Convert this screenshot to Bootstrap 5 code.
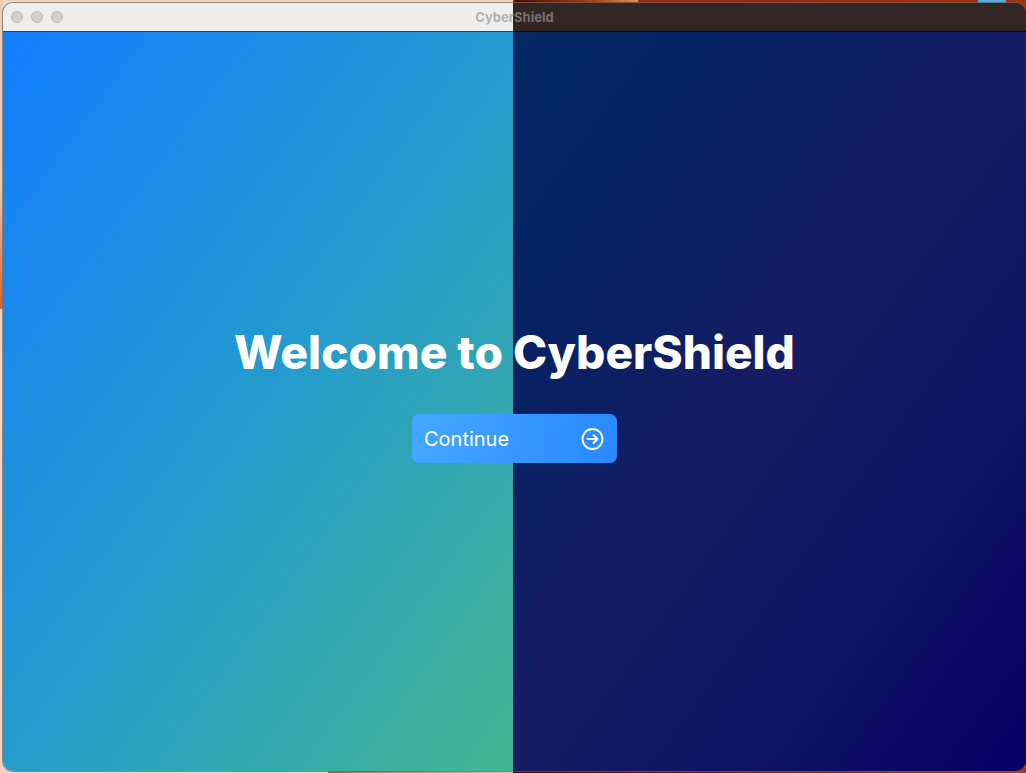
<!DOCTYPE html>
<html lang="en">
<head>
<meta charset="utf-8">
<meta name="viewport" content="width=device-width, initial-scale=1">
<title>CyberShield</title>
<link href="https://cdn.jsdelivr.net/npm/bootstrap@5.3.0/dist/css/bootstrap.min.css" rel="stylesheet">
<style>
  :root { --split: calc(50vw - 3px); }
  body {
    font-family: Inter, "Liberation Sans", sans-serif;
    padding: 3px 0 2px 3px;
    /* desktop wallpaper showing around the window */
    background:
      linear-gradient(#48b4e6, #48b4e6) 98% 0 / 28px 3px no-repeat,
      linear-gradient(90deg, #4a0800, #a83a10 60%, #f09040) 57% 0 / 12vw 2px no-repeat,
      linear-gradient(#e9cdb5 60%, #d8602f) 0 0 / 3px 40vh no-repeat,
      linear-gradient(90deg, #a4693f, #d9c0ac) 39% 100% / 18vw 2px no-repeat,
      linear-gradient(90deg, #380008, #b8320c) 100% 100% / 50vw 2px no-repeat,
      linear-gradient(90deg, #f0d6c1 50%, #8c2406 50%, #a82e0c);
  }
  .app-window { border-radius: 10px; box-shadow: 0 0 0 1px rgba(110, 100, 98, .7); }
  .titlebar {
    height: 29px;
    border-bottom: 1px solid rgba(0, 0, 0, .75);
    background: linear-gradient(90deg, #f0eeed var(--split), #322725 var(--split));
    padding: 0 8px;
  }
  .window-dot { width: 12px; height: 12px; border: 1px solid #b9b7b5; background: #d3d1cf; }
  .window-title { font-size: 13px; line-height: 20px; font-weight: 700; color: rgba(150, 148, 146, .69); }
  .welcome {
    background:
      linear-gradient(126deg, #127eff, #249bce 50%, #43b68f) left / var(--split) 100% no-repeat,
      linear-gradient(126deg, #042963, #062263 22%, #161c63 49%, #0c1264 75%, #060064) right / calc(100% - var(--split)) 100% no-repeat;
  }
  .welcome-heading { font-size: 46px; line-height: 56px; font-weight: 800; margin-bottom: 34px; }
  .btn-continue {
    --bs-btn-border-width: 0px;
    --bs-btn-border-radius: 7px;
    --bs-btn-color: #fff;
    --bs-btn-hover-color: #fff;
    --bs-btn-padding-x: 12px;
    width: 205px;
    height: 49px;
    font-size: 20px;
    background: linear-gradient(100deg, #45a8ff, #2888ff);
  }
</style>
</head>
<body class="vh-100">
<div class="app-window h-100 d-flex flex-column overflow-hidden">
  <header class="titlebar d-flex align-items-center flex-shrink-0">
    <div class="d-flex gap-2 flex-fill w-50">
      <button type="button" class="window-dot rounded-circle p-0" aria-label="Close"></button>
      <button type="button" class="window-dot rounded-circle p-0" aria-label="Minimize"></button>
      <button type="button" class="window-dot rounded-circle p-0" aria-label="Zoom"></button>
    </div>
    <div class="window-title">CyberShield</div>
    <div class="flex-fill w-50"></div>
  </header>
  <main class="welcome flex-grow-1 d-flex flex-column align-items-center justify-content-center pb-3">
    <h1 class="welcome-heading text-white text-center">Welcome to CyberShield</h1>
    <button type="button" class="btn btn-continue d-flex align-items-center justify-content-between">
      Continue
      <svg width="24" height="24" viewBox="0 0 24 24" fill="none" stroke="currentColor" stroke-width="1.8" stroke-linecap="round" stroke-linejoin="round" aria-hidden="true">
        <circle cx="11.5" cy="12" r="10"/>
        <path d="M6.5 12h10M12.5 8l4 4-4 4"/>
      </svg>
    </button>
  </main>
</div>
<script src="https://cdn.jsdelivr.net/npm/bootstrap@5.3.0/dist/js/bootstrap.bundle.min.js"></script>
</body>
</html>
